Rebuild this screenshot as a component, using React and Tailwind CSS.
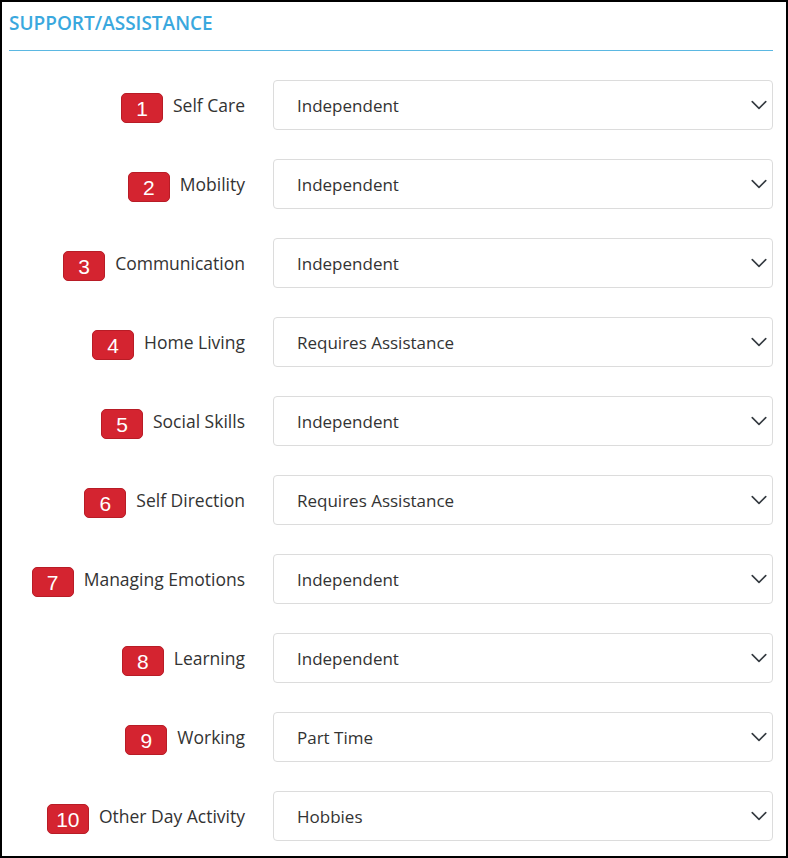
import React from 'react'

const rows = [
  { label: 'Self Care', value: 'Independent' },
  { label: 'Mobility', value: 'Independent' },
  { label: 'Communication', value: 'Independent' },
  { label: 'Home Living', value: 'Requires Assistance' },
  { label: 'Social Skills', value: 'Independent' },
  { label: 'Self Direction', value: 'Requires Assistance' },
  { label: 'Managing Emotions', value: 'Independent' },
  { label: 'Learning', value: 'Independent' },
  { label: 'Working', value: 'Part Time' },
  { label: 'Other Day Activity', value: 'Hobbies' },
]

const Chevron = () => (
  <svg className="w-[18px] h-[18px]" viewBox="0 0 16 16" fill="none">
    <path d="M2 5l6 6 6-6" stroke="#343a40" strokeWidth="1.4" strokeLinecap="round" strokeLinejoin="round" />
  </svg>
)

const App = () => {
  return (
    <div className="w-[788px] h-[858px] border-2 border-black bg-white pl-[7px] pr-[13px] font-['Open_Sans',sans-serif] overflow-hidden">
      {/* Header */}
      <div className="pt-[9px]">
        <h2 className="text-[19px] leading-[24px] font-semibold text-[#3aa8de]">SUPPORT/ASSISTANCE</h2>
        <div className="mt-[15px] h-px bg-[#5bb8e2]"></div>
      </div>

      {/* Rows */}
      <div className="mt-[29px] flex flex-col gap-[29px]">
        {rows.map((row, i) => (
          <div key={row.label} className="flex items-center">
            <div className="w-[236px] flex items-center justify-end gap-[10px]">
              <span className="w-[42px] h-[30px] mt-[6px] rounded-[5px] bg-[#d42430] border border-[#b81c26] flex items-center justify-center text-white text-[21px] font-['Liberation_Sans',sans-serif] leading-none">
                {i + 1}
              </span>
              <span className="text-[17.5px] text-[#333] leading-[24px]">{row.label}</span>
            </div>
            <div className="ml-[28px] flex-1 h-[50px] border border-[#dcdcdc] rounded-[4px] flex items-center justify-between pl-[23px] pr-[4px]">
              <span className="text-[17px] text-[#333] pt-px">{row.value}</span>
              <Chevron />
            </div>
          </div>
        ))}
      </div>
    </div>
  )
}

export default App
